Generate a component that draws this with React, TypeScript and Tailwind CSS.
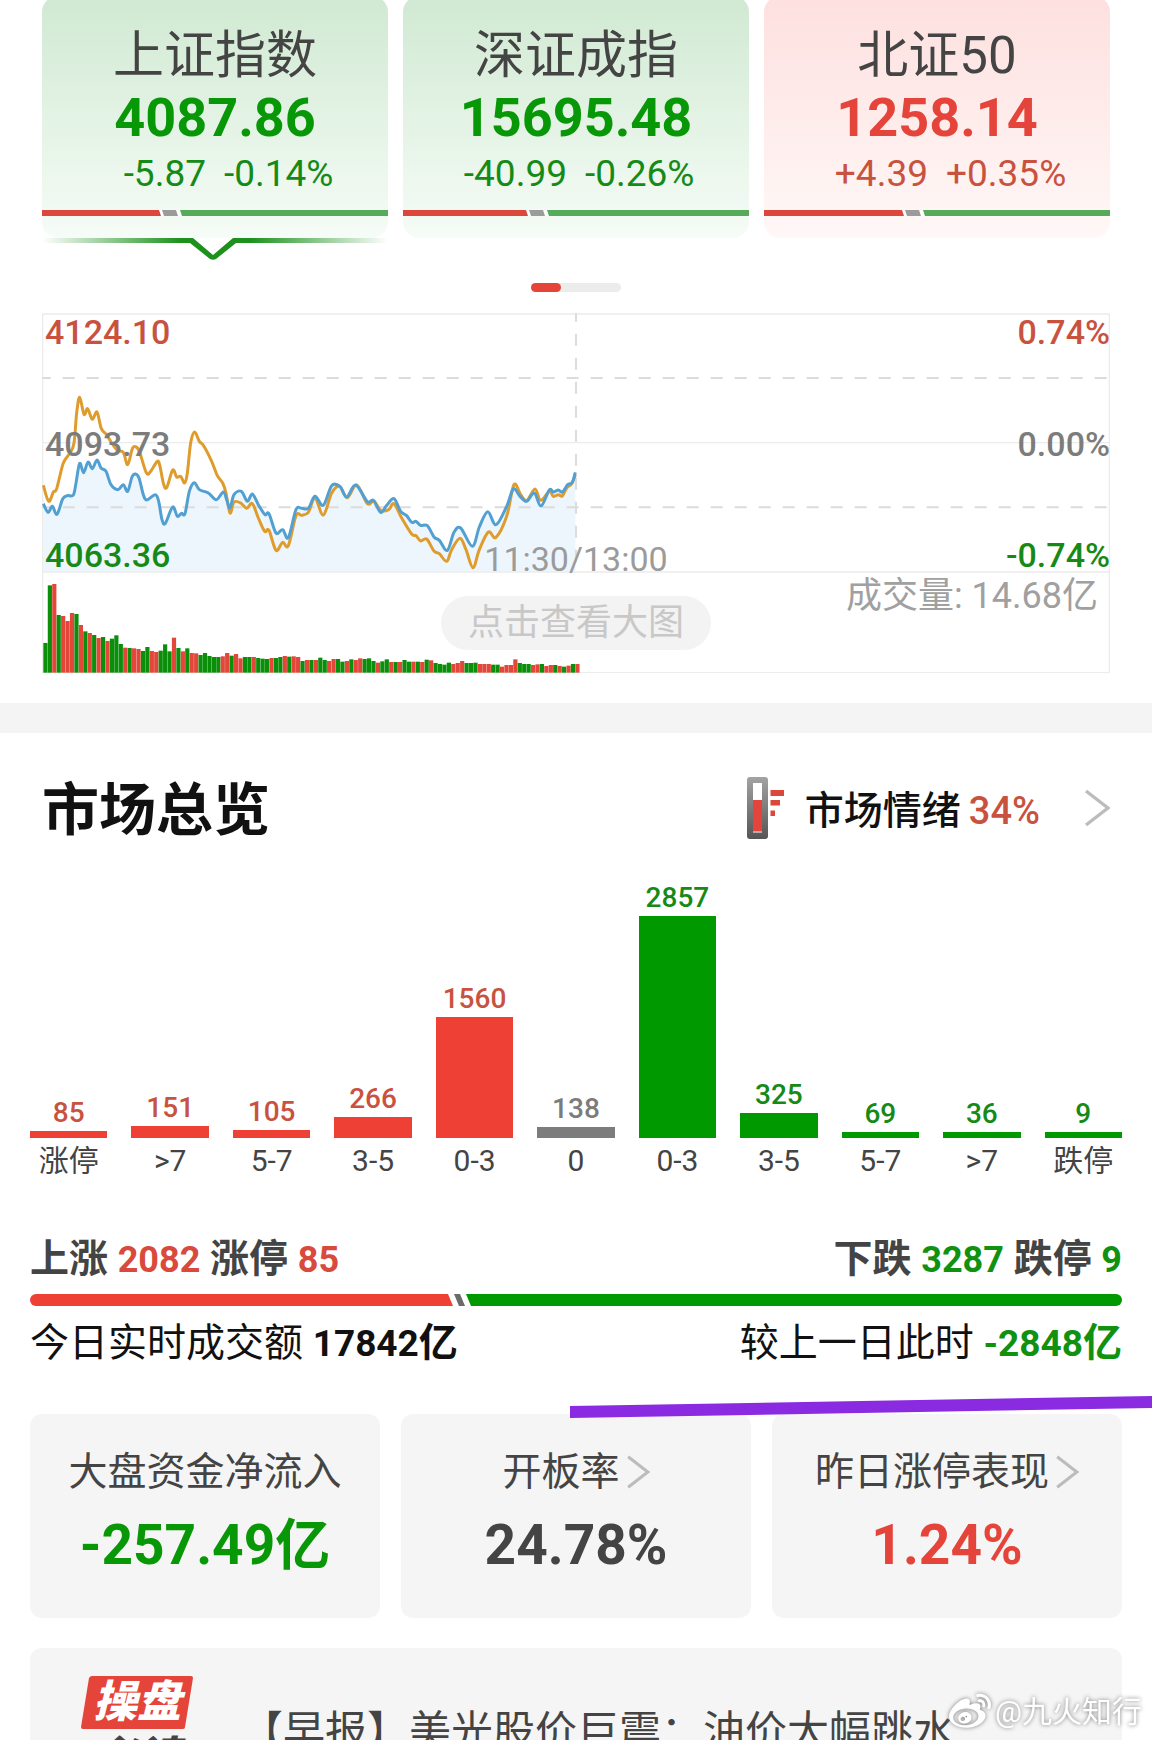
import { useState } from "react";
import { FaWeibo } from "react-icons/fa";

type Tone = "up" | "down" | "flat";

const INDEXES = [
  { name: "上证指数", value: "4087.86", change: "-5.87", percent: "-0.14%", tone: "down", split: 118 },
  { name: "深证成指", value: "15695.48", change: "-40.99", percent: "-0.26%", tone: "down", split: 124 },
  { name: "北证50", value: "1258.14", change: "+4.39", percent: "+0.35%", tone: "up", split: 139 },
] as const;

const DISTRIBUTION: { label: string; count: number; tone: Tone }[] = [
  { label: "涨停", count: 85, tone: "up" },
  { label: ">7", count: 151, tone: "up" },
  { label: "5-7", count: 105, tone: "up" },
  { label: "3-5", count: 266, tone: "up" },
  { label: "0-3", count: 1560, tone: "up" },
  { label: "0", count: 138, tone: "flat" },
  { label: "0-3", count: 2857, tone: "down" },
  { label: "3-5", count: 325, tone: "down" },
  { label: "5-7", count: 69, tone: "down" },
  { label: ">7", count: 36, tone: "down" },
  { label: "跌停", count: 9, tone: "down" },
];

const STATS = [
  { label: "大盘资金净流入", value: "-257.49亿", color: "text-[#079707]", link: false },
  { label: "开板率", value: "24.78%", color: "text-[#444444]", link: true },
  { label: "昨日涨停表现", value: "1.24%", color: "text-[#e5443a]", link: true },
];

const BAR_COLOR = { up: "bg-[#ee4035]", down: "bg-[#009900]", flat: "bg-[#7c7c7c]" };
const COUNT_COLOR = { up: "text-[#c9523f]", down: "text-[#168a16]", flat: "text-[#7c7c7c]" };

// Chart points, in thirds of a pixel
const AVERAGE_LINE: [number, number][] = [
  [4, 517], [20, 565], [34, 537], [44, 527], [64, 450], [84, 420], [96, 390], [104, 300], [113, 253],
  [126, 304], [137, 287], [151, 319], [165, 297], [178, 347], [194, 365], [209, 390], [226, 412],
  [244, 418], [257, 455], [271, 407], [280, 401], [292, 415], [313, 479], [326, 475], [346, 445],
  [354, 460], [364, 510], [374, 524], [392, 471], [404, 492], [416, 490], [428, 510], [436, 480],
  [446, 390], [458, 357], [472, 385], [484, 397], [509, 445], [526, 488], [542, 510], [552, 540],
  [564, 600], [576, 567], [596, 570], [614, 586], [631, 572], [649, 615], [668, 655], [681, 652],
  [702, 712], [722, 688], [739, 698], [762, 608], [779, 607], [799, 598], [819, 556], [844, 606],
  [869, 540], [892, 520], [916, 554], [944, 516], [976, 572], [996, 564], [1016, 592], [1040, 590],
  [1056, 572], [1079, 615], [1109, 663], [1122, 668], [1136, 684], [1154, 678], [1176, 714],
  [1192, 722], [1214, 745], [1229, 710], [1254, 676], [1272, 710], [1293, 764], [1312, 710],
  [1339, 657], [1362, 673], [1394, 610], [1416, 515], [1436, 545], [1454, 563], [1479, 528],
  [1496, 562], [1522, 535], [1534, 550], [1549, 545], [1561, 549], [1574, 525], [1589, 512], [1600, 485],
];

const PRICE_LINE: [number, number][] = [
  [4, 572], [18, 598], [31, 580], [45, 604], [62, 558], [76, 548], [94, 546], [102, 510], [113, 451],
  [125, 479], [138, 447], [151, 467], [165, 441], [177, 465], [192, 475], [207, 515], [228, 530],
  [244, 515], [257, 535], [270, 492], [280, 483], [291, 495], [304, 545], [314, 561], [340, 545],
  [350, 565], [360, 620], [370, 631], [392, 582], [406, 610], [418, 601], [429, 602], [442, 535],
  [457, 509], [472, 530], [499, 540], [523, 560], [544, 537], [554, 560], [564, 585], [576, 545],
  [598, 535], [616, 565], [631, 543], [649, 575], [669, 605], [681, 602], [702, 660], [722, 650],
  [739, 674], [762, 590], [779, 586], [799, 586], [819, 550], [844, 577], [869, 518], [894, 520],
  [914, 552], [941, 516], [976, 566], [994, 562], [1016, 598], [1034, 577], [1056, 557], [1076, 595],
  [1094, 608], [1109, 628], [1122, 625], [1136, 637], [1156, 638], [1176, 672], [1192, 682],
  [1216, 712], [1236, 658], [1256, 645], [1291, 700], [1312, 642], [1337, 596], [1362, 635],
  [1394, 580], [1414, 528], [1434, 550], [1454, 565], [1477, 540], [1497, 579], [1522, 531],
  [1534, 537], [1549, 531], [1561, 537], [1577, 515], [1591, 508], [1600, 478],
];

const VOLUMES = [
  89, 262, 266, 173, 170, 155, 179, 176, 143, 124, 119, 113, 104, 107, 95, 102, 112, 86, 75, 74, 73, 71,
  65, 77, 65, 62, 66, 85, 64, 105, 74, 64, 73, 59, 58, 53, 59, 50, 47, 47, 49, 59, 51, 56, 43, 47, 47, 47,
  44, 42, 41, 44, 44, 47, 50, 48, 49, 47, 35, 38, 38, 38, 45, 38, 35, 41, 41, 33, 35, 40, 38, 43, 41, 43,
  35, 30, 34, 40, 32, 32, 32, 38, 33, 33, 33, 32, 39, 37, 29, 26, 24, 30, 26, 29, 35, 29, 29, 30, 26, 26,
  26, 24, 24, 18, 23, 23, 40, 29, 26, 26, 23, 25, 26, 20, 23, 23, 20, 18, 21, 26, 26,
];
const VOLUME_SIDES =
  "ggrgrrrgrgrgrgrggg" +
  "rgrrggrrgggrgrgrrgggggrrgrrggrggg" +
  "rggrgrrgrgrggrrggrgrrggg" +
  "rggrgrggrgrgrggggrrrgggrrrggrrrrgggrrgrrgrgrg" +
  "r";

// Smooth path through all the points
function curve(points: [number, number][]) {
  return points
    .map(([x, y], i) => {
      if (i === 0) return `M${x} ${y}`;
      const p0 = points[Math.max(i - 2, 0)];
      const p1 = points[i - 1];
      const p3 = points[Math.min(i + 1, points.length - 1)];
      return `C${p1[0] + (x - p0[0]) / 6} ${p1[1] + (y - p0[1]) / 6} ${x - (p3[0] - p1[0]) / 6} ${
        y - (p3[1] - p1[1]) / 6
      } ${x} ${y}`;
    })
    .join(" ");
}

export default function App() {
  return (
    <main className="relative h-screen overflow-hidden bg-white font-['Roboto','Noto_Sans_CJK_SC',sans-serif] text-[#444444]">
      <IndexTabs />
      <MinuteChart />
      <div className="mt-[30px] h-[30px] bg-[#f4f4f4]" />
      <Overview />
      <Watermark />
    </main>
  );
}

function IndexTabs() {
  const [selected, setSelected] = useState(0);

  return (
    <div className="-mt-1 px-[42px]">
      <div className="grid h-[264px] grid-cols-3 items-start gap-[15px]">
        {INDEXES.map((item, i) => (
          <div key={item.name}>
            <button
              onClick={() => setSelected(i)}
              className={`block w-full cursor-pointer rounded-2xl bg-linear-to-b pt-7 pb-[22px] ${
                item.tone === "up" ? "from-[#fde0df] to-[#fff8f7]" : "from-[#d0e9d2] to-[#f6fcf7]"
              }`}
            >
              <span className="block text-[51px] leading-[64px]">{item.name}</span>
              <span
                className={`block text-[54px] leading-[60px] font-bold ${
                  item.tone === "up" ? "text-[#e5443a]" : "text-[#079707]"
                }`}
              >
                {item.value}
              </span>
              <span
                className={`grid grid-cols-2 gap-[18px] pt-1 pb-3.5 text-[37px] leading-[44px] ${
                  item.tone === "up" ? "text-[#c9523f]" : "text-[#168a16]"
                }`}
              >
                <span className="text-right">{item.change}</span>
                <span className="text-left">{item.percent}</span>
              </span>
              <SplitBar at={item.split} />
            </button>
            {selected === i && <SelectedMark />}
          </div>
        ))}
      </div>
      <div className="mx-auto mt-[23px] h-[9px] w-[90px] rounded-full bg-[#ececec]">
        <div className="h-full w-[30px] rounded-full bg-[#e5443a]" />
      </div>
    </div>
  );
}

function SplitBar({ at }: { at: number }) {
  return (
    <svg viewBox="0 0 346 6" preserveAspectRatio="none" className="block h-1.5 w-full">
      <rect width="346" height="6" fill="#fff" />
      <path d={`M0 0H${at - 1}L${at + 1} 6H0Z`} fill="#db473a" />
      <path d={`M${at + 2} 0H${at + 16}L${at + 18} 6H${at + 4}Z`} fill="#9b9b9b" />
      <path d={`M${at + 20} 0H346V6H${at + 22}Z`} fill="#56ab5a" />
    </svg>
  );
}

function SelectedMark() {
  return (
    <svg viewBox="0 0 346 22" className="block w-full">
      <defs>
        <linearGradient id="mark" gradientUnits="userSpaceOnUse" x1="0" y1="0" x2="346" y2="0">
          <stop offset="0" stopColor="#1c911c" stopOpacity="0" />
          <stop offset="0.4" stopColor="#1c911c" />
          <stop offset="0.6" stopColor="#1c911c" />
          <stop offset="1" stopColor="#1c911c" stopOpacity="0" />
        </linearGradient>
      </defs>
      <path d="M0 0H151L171 17L191 0H346V5H194L174 21Q171 22.500 168 21L148 5H0Z" fill="url(#mark)" />
    </svg>
  );
}

function MinuteChart() {
  const price = curve(PRICE_LINE);

  return (
    <div className="relative mx-[42px] mt-[21px] h-[360px]">
      <svg viewBox="0 0 3204 1080" preserveAspectRatio="none" className="block h-full w-full">
        <path d={`${price} V776 H4 Z`} fill="#edf6fd" />
        <g fill="none" stroke="#ececec" strokeWidth="4">
          <path d="M2 3H3202V1079H2Z" />
          <path d="M0 389H3204M0 777H3204" />
        </g>
        <g fill="none" stroke="#dcdcdc" strokeWidth="6" strokeDasharray="36 36" strokeDashoffset="10">
          <path d="M0 195H3204" />
          <path d="M0 583H3204" />
          <path d="M1602 0V776" />
        </g>
        {VOLUMES.map((v, i) => (
          <rect
            key={i}
            x={4 + i * 13.3}
            y={1079 - v}
            width="12.6"
            height={v}
            fill={VOLUME_SIDES[i] === "r" ? "#e2473a" : "#0b8f0b"}
          />
        ))}
        <path d={curve(AVERAGE_LINE)} fill="none" stroke="#df9c2c" strokeWidth="9" strokeLinejoin="round" />
        <path d={price} fill="none" stroke="#529fd2" strokeWidth="9" strokeLinejoin="round" />
      </svg>

      <div className="absolute inset-x-0 top-0 flex h-[261px] justify-between pt-px text-[34px] leading-[37px] font-medium">
        <div className="flex flex-col justify-between pl-[3px]">
          <span className="text-[#c9523f]">4124.10</span>
          <span className="text-[#7c7c7c]">4093.73</span>
          <span className="text-[#168a16]">4063.36</span>
        </div>
        <div className="flex flex-col justify-between text-right">
          <span className="text-[#c9523f]">0.74%</span>
          <span className="text-[#7c7c7c]">0.00%</span>
          <span className="text-[#168a16]">-0.74%</span>
        </div>
      </div>
      <span className="absolute inset-x-0 top-[228px] text-center text-[34px] leading-[36px] text-[#9b9b9b]">
        11:30/13:00
      </span>
      <span className="absolute top-[263px] right-3 text-[36px] leading-[40px] text-[#a0a0a0]">成交量: 14.68亿</span>
      <button className="absolute top-[283px] left-1/2 h-[54px] w-[270px] -translate-x-1/2 cursor-pointer rounded-full bg-[#f3f3f3] text-[36px] leading-[54px] text-[#c8c8c8]">
        点击查看大图
      </button>
    </div>
  );
}

function Overview() {
  return (
    <section className="px-[30px] pt-10">
      <div className="flex h-[70px] items-center justify-between px-3">
        <h2 className="pt-1.5 text-[57px] leading-[70px] font-bold text-[#111111]">市场总览</h2>
        <a href="#sentiment" className="flex items-center text-[39px] leading-[48px] text-[#111111]">
          <Thermometer />
          <span className="ml-5 pt-1.5 font-medium">市场情绪</span>
          <span className="ml-2 pt-1.5 text-[38px] font-medium text-[#c9523f]">34%</span>
          <Chevron className="ml-11 h-[38px] w-[26px]" />
        </a>
      </div>

      <Distribution />

      <div className="mt-[54px] flex justify-between text-[39px] leading-[50px] font-bold">
        <p>
          上涨 <span className="text-[36px] text-[#d9493c]">2082</span> 涨停{" "}
          <span className="text-[36px] text-[#d9493c]">85</span>
        </p>
        <p>
          下跌 <span className="text-[36px] text-[#109110]">3287</span> 跌停{" "}
          <span className="text-[36px] text-[#109110]">9</span>
        </p>
      </div>
      <svg viewBox="0 0 1092 12" preserveAspectRatio="none" className="mt-[9px] block h-3 w-full">
        <path d="M6 0H418L423 12H6A6 6 0 0 1 6 0Z" fill="#ee4035" />
        <path d="M424 0H430L435 12H429Z" fill="#6b6b6b" />
        <path d="M436 0H1086A6 6 0 0 1 1086 12H441Z" fill="#009900" />
      </svg>
      <div className="mt-3 flex justify-between text-[39px] leading-[50px] text-[#111111]">
        <p>
          今日实时成交额 <b className="text-[37px]">17842</b>
          <b>亿</b>
        </p>
        <p>
          较上一日此时{" "}
          <span className="font-bold text-[#109110]">
            <span className="text-[37px]">-2848</span>亿
          </span>
        </p>
      </div>

      <div className="relative mt-[45px] grid grid-cols-3 gap-[21px]">
        {STATS.map((s) => (
          <div key={s.label} className="flex h-[204px] flex-col items-center rounded-xl bg-[#f5f5f5] pt-[33px]">
            <div className="flex items-center text-[39px] leading-[50px]">
              {s.label}
              {s.link && <Chevron className="ml-1.5 h-[34px] w-6" />}
            </div>
            <p className={`mt-4 text-[55px] leading-[64px] font-bold ${s.color}`}>{s.value}</p>
          </div>
        ))}
        <svg
          viewBox="0 0 582 24"
          preserveAspectRatio="none"
          className="absolute -top-[18px] -right-[30px] left-[540px] h-6 w-[calc(100%-510px)]"
        >
          <path d="M0 10L582 0V12L0 22Z" fill="#8a2be2" />
        </svg>
      </div>

      <a href="#news" className="mt-[30px] flex h-40 rounded-xl bg-[#f5f5f5] px-[51px] pt-7">
        <NewsLogo />
        <span className="ml-12 pt-[26px] text-[42px] leading-[60px] whitespace-nowrap">
          【早报】美光股价巨震：油价大幅跳水
        </span>
      </a>
    </section>
  );
}

function Distribution() {
  return (
    <div className="mt-[31px] grid grid-cols-11 gap-6 text-center">
      {DISTRIBUTION.map((d, i) => (
        <div key={i} className="flex h-[306px] flex-col justify-end">
          <span className={`text-[28px] leading-[36px] font-medium ${COUNT_COLOR[d.tone]}`}>{d.count}</span>
          <div
            className={BAR_COLOR[d.tone]}
            style={{ height: Math.max(6, Math.round(d.count * 0.0777)) }}
          />
          <span className="pt-1 text-[30px] leading-[38px]">{d.label}</span>
        </div>
      ))}
    </div>
  );
}

function Chevron({ className }: { className: string }) {
  return (
    <svg viewBox="0 0 26 38" className={className} fill="none" stroke="#bcbcbc" strokeWidth="3.4">
      <path d="M2 2L24 19L2 36" />
    </svg>
  );
}

function Thermometer() {
  return (
    <svg viewBox="0 0 38 62" className="h-[62px] w-[38px]">
      <defs>
        <linearGradient id="tube" x1="0" y1="0" x2="0" y2="1">
          <stop offset="0" stopColor="#a3a3a3" />
          <stop offset="1" stopColor="#555555" />
        </linearGradient>
      </defs>
      <rect width="21" height="62" rx="3" fill="url(#tube)" />
      <rect x="6" y="6" width="9" height="50" fill="#b9aaa8" />
      <rect x="6" y="6" width="9" height="17" fill="#fff" />
      <rect x="6" y="23" width="9" height="31" fill="#e5443a" />
      <path d="M23.500 13H37V19H23.500ZM23.500 23H33V28.500H23.500ZM23.500 33.500H28V39H23.500Z" fill="#db473a" />
    </svg>
  );
}

function NewsLogo() {
  return (
    <div className="w-28 shrink-0 text-center text-[44px] font-black italic">
      <div className="relative flex h-[53px] items-center justify-center text-white">
        <svg viewBox="0 0 112 53" className="absolute inset-0 h-full w-full">
          <path d="M11 0H110Q112 0 112 2L104 51Q104 53 102 53H2Q0 53 0 51L8 2Q9 0 11 0Z" fill="#e5443a" />
        </svg>
        <span className="relative leading-[53px]">操盘</span>
      </div>
      <div className="pt-1.5 leading-[46px]">必读</div>
    </div>
  );
}

function Watermark() {
  return (
    <div className="absolute right-[10px] bottom-[7px] flex items-center gap-1 text-[30px] leading-[38px] text-white drop-shadow-[0_0_2px_#777777]">
      <FaWeibo size={42} />
      @九火知行
    </div>
  );
}
